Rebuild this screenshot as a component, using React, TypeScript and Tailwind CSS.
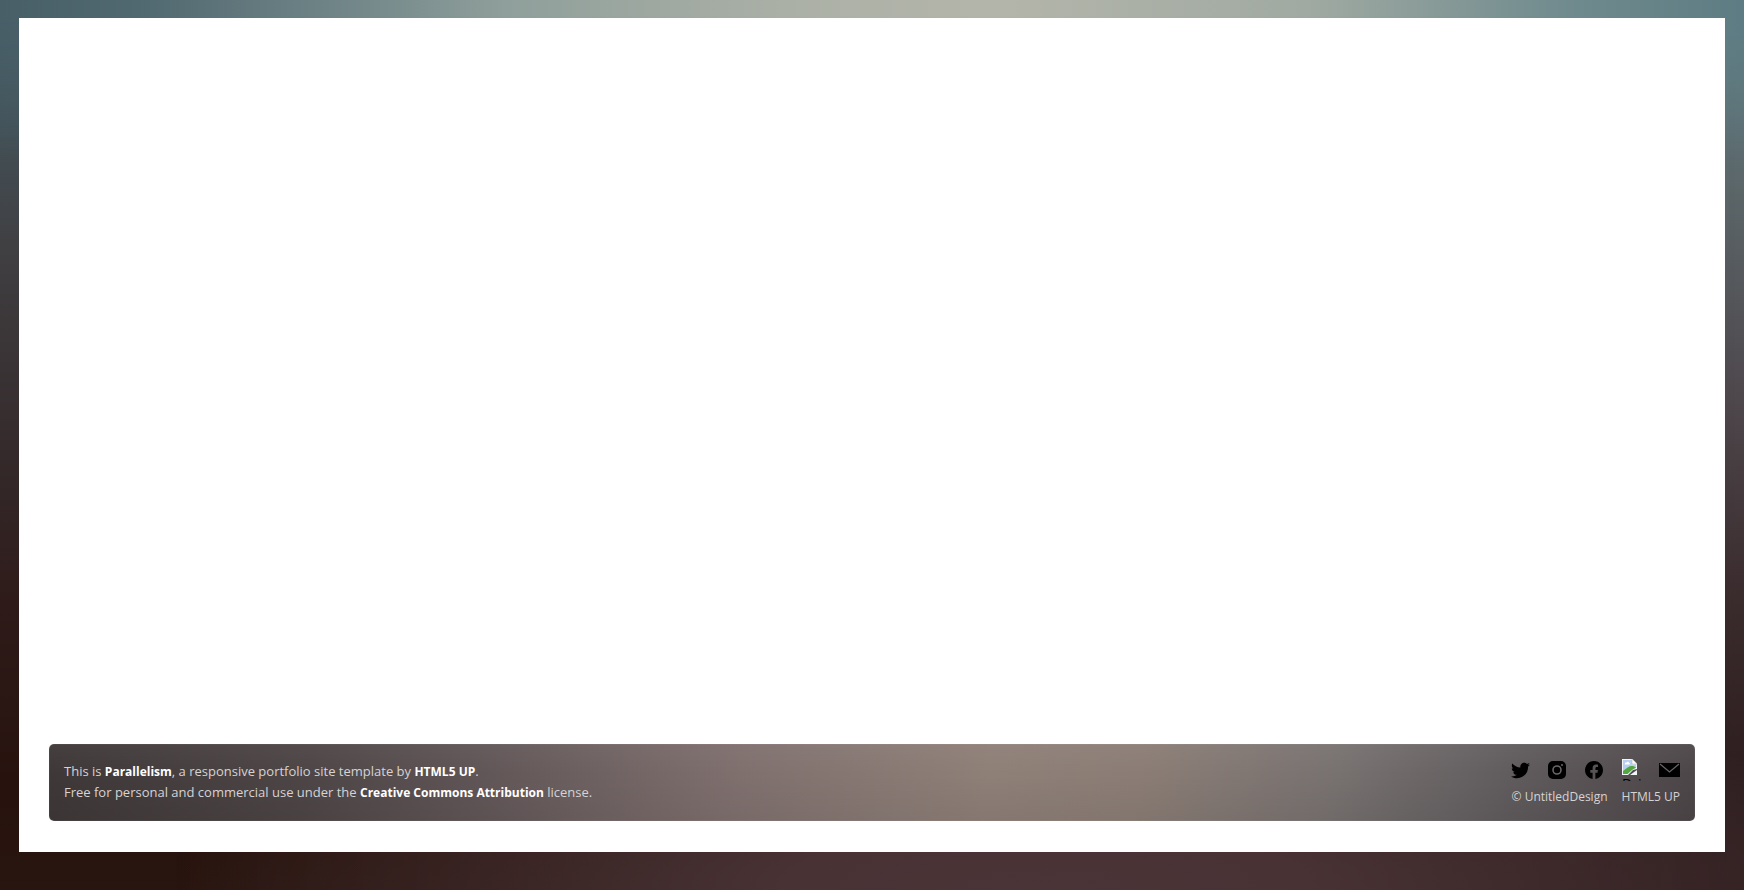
import { BsFacebook } from "react-icons/bs";
import { FaTwitter } from "react-icons/fa";

const bold = "text-[12px] font-bold text-white";
const iconLink = "flex h-[22px] w-[21px] items-center";

function BrokenPicture() {
  return (
    <svg viewBox="0 0 16 16" className="h-4 w-4" aria-hidden="true">
      <path d="M0 0h10.500L15 4.500V10l-4 1-5 5H0z" fill="#f3f5f8" />
      <path d="M1 1h9v4.500h4v3.500l-4 1.500L5.500 15H1z" fill="#b9cff0" />
      <path d="M1 15v-3c2-1 5-4.500 8-5 2-.3 4 .5 5 1.500L10 11l-4.500 4z" fill="#56a742" />
      <path d="M3 5.500c-.5-1.500.8-2.200 1.600-1.800C5 2.300 7 2.600 7 4c1.300 0 1.300 1.500 0 1.500z" fill="#fff" />
      <path d="M10 0v5h5z" fill="#fff" stroke="#aeb5bb" strokeWidth=".6" />
      <path d="M8 16l7-5v5z" fill="#f3f5f8" />
    </svg>
  );
}

export default function App() {
  return (
    <div className="relative isolate flex min-h-screen flex-col bg-[linear-gradient(to_bottom,#465c66_0%,#435157_14%,#403f42_28%,#352b2c_50%,#2e1b19_68%,#27120e_88%,#29150f_100%)] px-[19px] pt-[18px] pb-[38px] font-['Open_Sans','Noto_Sans',sans-serif]">
      <div className="absolute inset-0 -z-10 bg-[linear-gradient(to_bottom,#638087_0%,#5c686b_20%,#4e474c_45%,#3a2b2d_67%,#2f1f20_85%,#2e1d1e_100%)] [mask-image:linear-gradient(to_right,transparent_10%,black)]" />
      <div className="absolute inset-0 -z-10 bg-[radial-gradient(ellipse_50%_25%_at_60%_100%,#4a3437_0%,#483234_30%,transparent_100%)]" />
      <div className="absolute inset-x-0 top-0 -z-10 h-40 bg-[linear-gradient(to_right,#485f68_0%,#506870_8%,#75898b_21%,#8f9f9b_29%,#abb0a6_45%,#b4b5aa_57%,#a0aaa2_75%,#728c8f_89%,#5d7c83_100%)] [mask-image:linear-gradient(to_bottom,black_10%,transparent)]" />
      <main className="flex flex-1 flex-col justify-end bg-white px-[30px] pb-[31px]">
        <footer className="flex justify-between rounded-[5px] bg-[linear-gradient(to_bottom,rgba(255,255,255,.04),transparent_40%,rgba(0,0,0,.06)),linear-gradient(100deg,#3e3738_0%,#4d4546_16%,#665a5b_29%,#7f706e_42%,#8e7f77_57%,#8b7d75_66%,#777170_78%,#615c5e_88%,#4c4547_100%)] px-[15px] pt-[15px] pb-4 text-[#d7d3d3] shadow-[inset_0_0_1px_rgba(255,255,255,.5)]">
          <p className="pt-[2px] text-[13px] leading-5">
            This is <a href="#parallelism" className={bold}>Parallelism</a>, a responsive portfolio site template by{" "}
            <a href="#html5up" className={bold}>HTML5 UP</a>.
            <br />
            Free for personal and commercial use under the{" "}
            <a href="#license" className={bold}>Creative Commons Attribution</a> license.
          </p>
          <div className="flex flex-col items-end">
            <nav className="flex gap-4 text-black">
              <a href="#twitter" aria-label="Twitter" className={iconLink}>
                <FaTwitter size={19} />
              </a>
              <a href="#instagram" aria-label="Instagram" className={iconLink}>
                <svg viewBox="0 0 18 18" className="h-[18px] w-[18px]">
                  <rect width="18" height="18" rx="5" />
                  <circle cx="9" cy="9" r="4" fill="none" stroke="#6c6667" strokeWidth="1.6" />
                  <circle cx="14" cy="4" r="1" fill="#6c6667" />
                </svg>
              </a>
              <a href="#facebook" aria-label="Facebook" className={iconLink}>
                <BsFacebook size={18} />
              </a>
              <a href="#dribbble" className="h-[22px] w-[21px] overflow-hidden text-[14px] leading-[14px]">
                <BrokenPicture />
                <span className="block pt-[2px]">Dri</span>
              </a>
              <a href="#mail" aria-label="Email" className={iconLink}>
                <svg viewBox="0 0 21 14" className="h-[14px] w-[21px]">
                  <path d="M0 0h21v14H0z" />
                  <path d="M1 1l9.500 8L20 1" fill="none" stroke="#696364" strokeWidth="1.300" />
                </svg>
              </a>
            </nav>
            <ul className="flex gap-[14px] pt-2 text-[12px] leading-4">
              <li>© UntitledDesign</li>
              <li><a href="#html5up">HTML5 UP</a></li>
            </ul>
          </div>
        </footer>
      </main>
    </div>
  );
}
